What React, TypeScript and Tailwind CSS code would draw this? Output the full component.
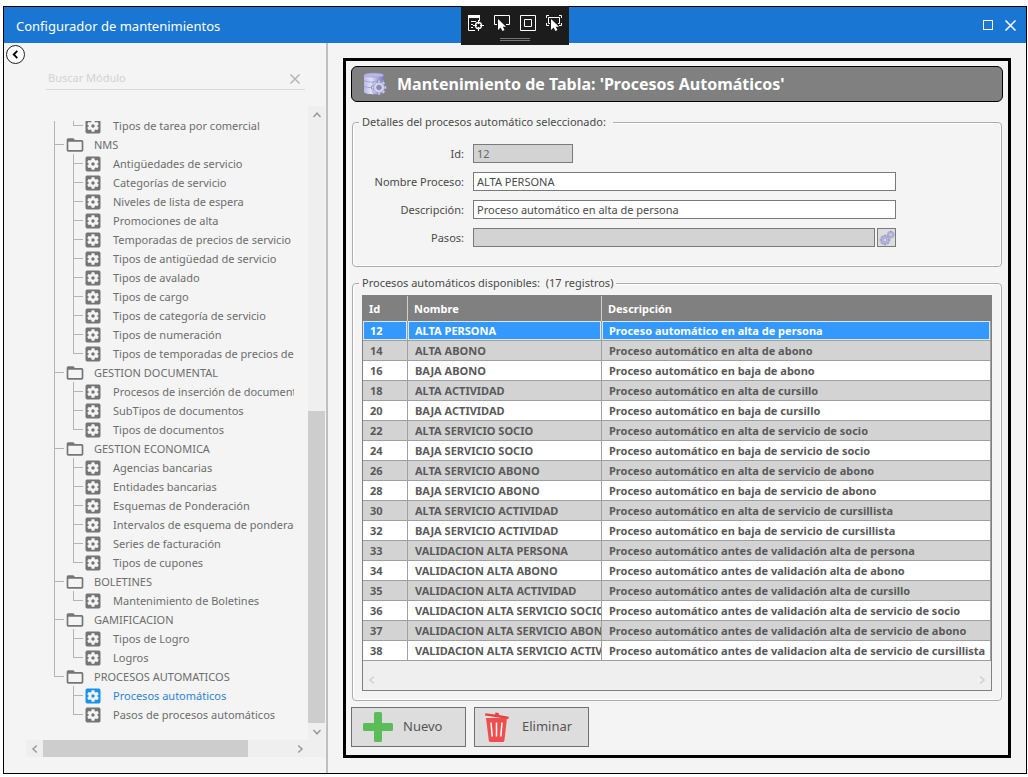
import { useState } from "react";
import { MdSettingsApplications, MdFolderOpen } from "react-icons/md";

type Group = { name: string; items: string[] };

const groups: Group[] = [
  { name: "", items: ["Tipos de tarea por comercial"] },
  {
    name: "NMS",
    items: [
      "Antigüedades de servicio",
      "Categorías de servicio",
      "Niveles de lista de espera",
      "Promociones de alta",
      "Temporadas de precios de servicio",
      "Tipos de antigüedad de servicio",
      "Tipos de avalado",
      "Tipos de cargo",
      "Tipos de categoría de servicio",
      "Tipos de numeración",
      "Tipos de temporadas de precios de servicio",
    ],
  },
  {
    name: "GESTION DOCUMENTAL",
    items: ["Procesos de inserción de documentos", "SubTipos de documentos", "Tipos de documentos"],
  },
  {
    name: "GESTION ECONOMICA",
    items: [
      "Agencias bancarias",
      "Entidades bancarias",
      "Esquemas de Ponderación",
      "Intervalos de esquema de ponderación",
      "Series de facturación",
      "Tipos de cupones",
    ],
  },
  { name: "BOLETINES", items: ["Mantenimiento de Boletines"] },
  { name: "GAMIFICACION", items: ["Tipos de Logro", "Logros"] },
  { name: "PROCESOS AUTOMATICOS", items: ["Procesos automáticos", "Pasos de procesos automáticos"] },
];

const rows: [number, string, string][] = [
  [12, "ALTA PERSONA", "Proceso automático en alta de persona"],
  [14, "ALTA ABONO", "Proceso automático en alta de abono"],
  [16, "BAJA ABONO", "Proceso automático en baja de abono"],
  [18, "ALTA ACTIVIDAD", "Proceso automático en alta de cursillo"],
  [20, "BAJA ACTIVIDAD", "Proceso automático en baja de cursillo"],
  [22, "ALTA SERVICIO SOCIO", "Proceso automático en alta de servicio de socio"],
  [24, "BAJA SERVICIO SOCIO", "Proceso automático en baja de servicio de socio"],
  [26, "ALTA SERVICIO ABONO", "Proceso automático en alta de servicio de abono"],
  [28, "BAJA SERVICIO ABONO", "Proceso automático en baja de servicio de abono"],
  [30, "ALTA SERVICIO ACTIVIDAD", "Proceso automático en alta de servicio de cursillista"],
  [32, "BAJA SERVICIO ACTIVIDAD", "Proceso automático en baja de servicio de cursillista"],
  [33, "VALIDACION ALTA PERSONA", "Proceso automático antes de validación alta de persona"],
  [34, "VALIDACION ALTA ABONO", "Proceso automático antes de validación alta de abono"],
  [35, "VALIDACION ALTA ACTIVIDAD", "Proceso automático antes de validación alta de cursillo"],
  [36, "VALIDACION ALTA SERVICIO SOCIO", "Proceso automático antes de validación alta de servicio de socio"],
  [37, "VALIDACION ALTA SERVICIO ABONO", "Proceso automático antes de validación alta de servicio de abono"],
  [38, "VALIDACION ALTA SERVICIO ACTIVIDAD", "Proceso automático antes de validacion alta de servicio de cursillista"],
];

function Chevron({ d, className }: { d: string; className: string }) {
  return (
    <svg viewBox="0 0 10 10" className={className} fill="none" stroke="currentColor" strokeWidth="1.5" aria-hidden="true">
      <path d={d} />
    </svg>
  );
}
const UP = "M1.5 7 5 3.2 8.5 7";
const DOWN = "M1.5 3 5 6.8 8.5 3";
const LEFT = "M6.8 1.5 3 5l3.8 3.5";
const RIGHT = "M3.2 1.5 7 5 3.2 8.5";

const TEETH = [0, 45, 90, 135, 180, 225, 270, 315];

function GearShape({ cx, cy, r, fill, hole }: { cx: number; cy: number; r: number; fill: string; hole: string }) {
  return (
    <g transform={`translate(${cx} ${cy}) scale(${r / 6})`}>
      {TEETH.map((a) => (
        <rect key={a} x="-1.2" y="-6" width="2.4" height="3" fill={fill} stroke="#7f7fae" strokeWidth="0.5" transform={`rotate(${a})`} />
      ))}
      <circle r="4.4" fill={fill} stroke="#8c8cba" strokeWidth="0.5" />
      <circle r="1.9" fill={hole} stroke="#7f7fae" strokeWidth="0.6" />
    </g>
  );
}

function DatabaseIcon() {
  return (
    <svg viewBox="0 0 24 24" className="h-6 w-6" aria-hidden="true">
      <defs>
        <linearGradient id="db" x1="0" x2="1">
          <stop offset="0" stopColor="#b9b8e6" />
          <stop offset="0.35" stopColor="#e0e0f8" />
          <stop offset="1" stopColor="#7776b4" />
        </linearGradient>
      </defs>
      <path d="M1 3C1 .5 21 .5 21 3V20c0 3-20 3-20 0Z" fill="url(#db)" />
      <ellipse cx="11" cy="3.2" rx="9.700" ry="2" fill="#b9b8e6" stroke="#9c9bd0" strokeWidth="0.6" />
      <path d="M1 8.5c2 2.200 18 2.200 20 0M1 14c2 2.200 18 2.200 20 0" fill="none" stroke="#a3a2d4" />
      <GearShape cx={16} cy={15.5} r={7.400} fill="#d3d4ee" hole="#8988bb" />
    </svg>
  );
}

function GearsIcon() {
  return (
    <svg viewBox="0 0 16 16" className="h-4 w-4" aria-hidden="true">
      <GearShape cx={6} cy={10} r={5} fill="#b9bbe0" hole="#e8e8f6" />
      <GearShape cx={11.8} cy={4.6} r={3.7} fill="#b9bbe0" hole="#e8e8f6" />
    </svg>
  );
}

function PlusIcon() {
  return (
    <svg viewBox="0 0 30 30" className="h-[30px] w-[30px]" aria-hidden="true">
      <path d="M12.5 0h5a1.5 1.5 0 0 1 1.5 1.5V11h9.500a1.500 1.500 0 0 1 1.500 1.500v5a1.500 1.500 0 0 1-1.500 1.500H19v9.500a1.500 1.500 0 0 1-1.500 1.500h-5a1.500 1.500 0 0 1-1.500-1.500V19H1.500A1.500 1.500 0 0 1 0 17.500v-5A1.500 1.500 0 0 1 1.500 11H11V1.500A1.500 1.500 0 0 1 12.500 0Z" fill="#5bbd57" />
    </svg>
  );
}

function TrashIcon() {
  return (
    <svg viewBox="0 0 24 30" className="h-[30px] w-6" aria-hidden="true">
      <path d="M.4 1.200 10 2.400l.5-2 3.200.5.3 2 9.800 1.900-.4 2.300L0 3.500Z" fill="#e8413f" />
      <path d="M1 6h21l-2.600 22.500q-.2 1.500-1.700 1.500H5.500Q4 30 3.800 28.500Z" fill="#ee4f4d" />
      <path d="m6 10.500 1.200 14M11.500 10.500v14M17 10.500l-1.200 14" stroke="#fff" strokeWidth="1.500" fill="none" />
    </svg>
  );
}

const CURSOR = "M4 4v11l2.600-2.400L8.500 16l2-1-1.700-3.300H12Z";

function DebugToolbar() {
  return (
    <div className="absolute -top-px left-1/2 flex h-[39px] w-[108px] -translate-x-1/2 flex-col items-center bg-[#1c1c1c] pt-[9px] text-white">
      <div className="flex gap-[10px]">
        <button aria-label="Árbol visual en vivo">
          <svg viewBox="0 0 16 16" className="block h-4 w-4" fill="none" stroke="currentColor">
            <path d="M.5 1v14.500H7M.5 2.500H12M11.500 2v4M3 6.500h5M3 9.500h2M3 12.500h2" />
            <path d="M0 1.500h12" strokeWidth="3" />
            <circle cx="10.500" cy="10.500" r="3" strokeWidth="1.300" />
            <path d="M10.500 5v4M10.500 12v4M5 10.500h4M12 10.500h4" />
          </svg>
        </button>
        <button aria-label="Seleccionar elemento">
          <svg viewBox="0 0 16 16" className="block h-4 w-4" fill="none" stroke="currentColor">
            <path d="M3 9.500H.5v-9h15v9H12" />
            <path d={CURSOR} fill="currentColor" stroke="none" />
          </svg>
        </button>
        <button aria-label="Mostrar adornos de diseño">
          <svg viewBox="0 0 16 16" className="block h-4 w-4" fill="none" stroke="currentColor">
            <path d="M.5.500h15v15H.5ZM4.500 4.500h7v7h-7Z" />
          </svg>
        </button>
        <button aria-label="Seguir elemento con foco">
          <svg viewBox="0 0 16 16" className="block h-4 w-4" fill="none" stroke="currentColor">
            <path d="M.5 3V.500H3M13 .500h2.500V3M.5 8v2.500H3M13 10.500h2.500V8M4 8.500H2.500v-6h11v6H12" />
            <path d={CURSOR} transform="translate(1 0)" fill="currentColor" stroke="none" />
          </svg>
        </button>
      </div>
      <div className="mt-[7px] h-[3px] w-[30px] border-y border-[#777]" />
    </div>
  );
}

function Tree({ selected, onSelect }: { selected: string; onSelect: (s: string) => void }) {
  return (
    <div className="mr-[14px] overflow-hidden">
      <ul className="-mt-[5px] whitespace-nowrap text-[11px] leading-[19px] text-[#6d6d6d]">
        {groups.map((g, gi) => {
          const lastGroup = gi === groups.length - 1;
          return (
            <li key={g.name}>
              {g.name && (
                <div className="flex h-[19px]">
                  <div className="w-[10px]">
                    <div className="h-[10px] border-b border-l border-[#b4b4b4]" />
                    {!lastGroup && <div className="h-[9px] border-l border-[#b4b4b4]" />}
                  </div>
                  <MdFolderOpen className="ml-px h-5 w-5 shrink-0 text-[#757575]" />
                  <span className="ml-[9px]">{g.name}</span>
                </div>
              )}
              <ul>
                {g.items.map((item, i) => (
                  <li key={item} className="flex h-[19px]">
                    <div className={lastGroup ? "w-[19px] shrink-0" : "w-[19px] shrink-0 border-l border-[#b4b4b4]"} />
                    <div className="w-[10px] shrink-0">
                      <div className="h-[10px] border-b border-l border-[#b4b4b4]" />
                      {i < g.items.length - 1 && <div className="h-[9px] border-l border-[#b4b4b4]" />}
                    </div>
                    <button
                      onClick={() => onSelect(item)}
                      className={item === selected ? "flex h-[19px] items-start text-[#2b83d8]" : "flex h-[19px] items-start"}
                    >
                      <MdSettingsApplications
                        className={
                          item === selected ? "h-5 w-5 shrink-0 text-[#1a94e6]" : "h-5 w-5 shrink-0 text-[#757575]"
                        }
                      />
                      <span className="ml-[10px]">{item}</span>
                    </button>
                  </li>
                ))}
              </ul>
            </li>
          );
        })}
      </ul>
    </div>
  );
}

function Sidebar() {
  const [selected, setSelected] = useState("Procesos automáticos");
  return (
    <aside className="flex w-[324px] shrink-0 flex-col border-r-2 border-[#bfbfbf] pb-4">
      <button
        aria-label="Contraer panel"
        className="mt-[2px] ml-[2px] flex h-[19px] w-[19px] items-center justify-center rounded-full border border-[#222] bg-white text-black"
      >
        <svg viewBox="0 0 10 10" className="h-[9px] w-[9px]" fill="none" stroke="currentColor" strokeWidth="2" aria-hidden="true">
          <path d="M7 1 3 5l4 4" />
        </svg>
      </button>
      <div className="mt-1 mr-[21px] ml-[42px] flex h-[22px] items-center border-b border-[#d9d9d9] pr-1 pl-[2px]">
        <input
          aria-label="Buscar Módulo"
          placeholder="Buscar Módulo"
          className="min-w-0 flex-1 bg-transparent text-[11px] outline-none placeholder:text-[#d2d2d2]"
        />
        <button aria-label="Borrar búsqueda" className="text-[#b5b5b5]">
          <svg viewBox="0 0 12 12" className="h-3 w-3" fill="none" stroke="currentColor" strokeWidth="1.500">
            <path d="m1.500 1.500 9 9M10.500 1.500l-9 9" />
          </svg>
        </button>
      </div>
      <div className="mt-4 ml-[22px] flex flex-1">
        <div className="min-w-0 flex-1 pt-[15px] pb-[15px] pl-7">
          <Tree selected={selected} onSelect={setSelected} />
        </div>
        <div className="flex w-[17px] flex-col bg-[#efefef] text-[#9a9a9a]">
          <div className="flex h-[17px] items-center justify-center">
            <Chevron d={UP} className="h-[10px] w-[10px]" />
          </div>
          <div className="flex-[48]" />
          <div className="flex-[52] bg-[#cdcdcd]" />
          <div className="flex h-[17px] items-center justify-center">
            <Chevron d={DOWN} className="h-[10px] w-[10px]" />
          </div>
        </div>
        <div className="w-px" />
      </div>
      <div className="mr-px ml-[22px] flex h-[17px] bg-[#efefef] text-[#9a9a9a]">
        <div className="flex w-[17px] items-center justify-center">
          <Chevron d={LEFT} className="h-[10px] w-[10px]" />
        </div>
        <div className="flex-[82] bg-[#cdcdcd]" />
        <div className="flex-[17]" />
        <div className="flex w-[17px] items-center justify-center">
          <Chevron d={RIGHT} className="h-[10px] w-[10px]" />
        </div>
        <div className="w-[17px]" />
      </div>
    </aside>
  );
}

const labelCls = "text-right text-[11px] leading-[19px]";
const editCls = "h-[19px] w-full border border-[#7a7a7a] bg-white px-[3px] text-[11px] leading-[17px] outline-none";
const readCls = "h-[19px] border border-[#7a7a7a] bg-[#d3d3d3] px-[3px] text-[11px] leading-[17px] text-[#666] outline-none";
const groupCls = "rounded-[4px] border border-[#a9adb0] shadow-[inset_0_0_0_1px_white]";
const legendCls = "ml-[6px] bg-[#f4f4f4] px-[3px] text-[11px] leading-[16px]";

function Details() {
  const [name, setName] = useState(rows[0][1]);
  const [desc, setDesc] = useState(rows[0][2]);
  return (
    <fieldset className={`mx-px mt-3 min-w-0 pb-[19px] ${groupCls}`}>
      <legend className={`${legendCls} pr-[7px]`}>Detalles del procesos automático seleccionado:</legend>
      <div className="mr-[105px] ml-[10px] grid grid-cols-[101px_1fr] gap-x-[9px] gap-y-[9px] pt-[14px]">
        <label htmlFor="id" className={labelCls}>Id:</label>
        <input id="id" readOnly value="12" className={`w-[100px] ${readCls}`} />
        <label htmlFor="nombre" className={labelCls}>Nombre Proceso:</label>
        <input id="nombre" value={name} onChange={(e) => setName(e.target.value)} className={editCls} />
        <label htmlFor="desc" className={labelCls}>Descripción:</label>
        <input id="desc" value={desc} onChange={(e) => setDesc(e.target.value)} className={editCls} />
        <label htmlFor="pasos" className={labelCls}>Pasos:</label>
        <div className="flex gap-[2px]">
          <input id="pasos" readOnly value="" className={`min-w-0 flex-1 ${readCls}`} />
          <button aria-label="Editar pasos" className="flex h-[19px] w-[19px] items-center justify-center border border-[#7a7a7a] bg-[#dddddd]">
            <GearsIcon />
          </button>
        </div>
      </div>
    </fieldset>
  );
}

function ProcessTable() {
  const [sel, setSel] = useState(12);
  const th = "h-[25px] border-r border-[#d0d0d0] p-0 pl-[6px] text-left last:border-[#808080]";
  const base = "h-5 overflow-hidden border-r border-b border-[#a0a0a0] p-0 pl-[7px]";
  return (
    <fieldset className={`mx-px mt-2 flex min-w-0 flex-1 flex-col px-[9px] pb-[9px] ${groupCls}`}>
      <legend className="-ml-[3px] bg-[#f4f4f4] px-[3px] text-[11px] leading-[16px] whitespace-pre">
        Procesos automáticos disponibles:  (17 registros)
      </legend>
      <div className="mt-1 overflow-hidden border border-[#808080] bg-[#efefef]">
        <table className="w-full table-fixed border-separate border-spacing-0 text-[11px] leading-[19px] font-bold whitespace-nowrap text-[#5a5a5a]">
          <colgroup>
            <col className="w-[45px]" />
            <col className="w-[194px]" />
            <col />
          </colgroup>
          <thead className="bg-[#808080] text-white">
            <tr>
              <th className={th}>Id</th>
              <th className={th}>Nombre</th>
              <th className={th}>Descripción</th>
            </tr>
          </thead>
          <tbody>
            {rows.map((r) => (
              <tr
                key={r[0]}
                onClick={() => setSel(r[0])}
                className={r[0] === sel ? "bg-[#3399ff] text-white" : "bg-white even:bg-[#d3d3d3]"}
              >
                {r.map((c, i) => (
                  <td key={i} className={r[0] === sel ? `${base} shadow-[inset_0_0_0_1px_#d5e9fb]` : base}>
                    {c}
                  </td>
                ))}
              </tr>
            ))}
          </tbody>
        </table>
        <div className="flex h-[29px] items-center justify-between px-1 pt-[9px] text-[#cfcfcf]">
          <Chevron d={LEFT} className="h-[10px] w-[10px]" />
          <Chevron d={RIGHT} className="h-[10px] w-[10px]" />
        </div>
      </div>
    </fieldset>
  );
}

const actionCls = "flex h-10 w-[115px] items-center border border-[#707070] bg-[#dddddd] text-[13px] text-[#555]";

export default function App() {
  return (
    <div className="flex min-h-screen flex-col bg-white pt-[6px] pr-px pb-[3px] pl-[3px] font-['Noto_Sans','Open_Sans',sans-serif] text-[#4a4a4a]">
      <div className="relative flex flex-1 flex-col border border-black bg-[#f4f4f4]">
        <header className="flex h-9 items-center justify-between bg-[#1976d2] pr-[10px] pl-3 text-white">
          <h1 className="pt-[3px] text-[13px]">Configurador de mantenimientos</h1>
          <div className="flex items-center gap-3">
            <button aria-label="Maximizar" className="h-[10px] w-[10px] border border-white" />
            <button aria-label="Cerrar">
              <svg viewBox="0 0 11 11" className="h-[11px] w-[11px]" fill="none" stroke="currentColor" strokeWidth="1.500">
                <path d="m.5.500 10 10M10.500.500l-10 10" />
              </svg>
            </button>
          </div>
        </header>
        <DebugToolbar />
        <div className="flex flex-1">
          <Sidebar />
          <main className="flex min-w-0 flex-1 p-[15px]">
            <div className="flex min-w-0 flex-1 flex-col border-[3px] border-black p-[5px] pb-2">
              <h2 className="flex h-9 shrink-0 items-center gap-[10px] rounded-[6px] border border-black bg-[#808080] pl-[11px] text-[16px] font-bold text-white">
                <DatabaseIcon />
                Mantenimiento de Tabla: 'Procesos Automáticos'
              </h2>
              <Details />
              <ProcessTable />
              <div className="mt-[6px] flex gap-2">
                <button className={`${actionCls} gap-[10px] pl-[11px]`}>
                  <PlusIcon />
                  Nuevo
                </button>
                <button className={`${actionCls} gap-[13px] pl-[10px]`}>
                  <TrashIcon />
                  Eliminar
                </button>
              </div>
            </div>
          </main>
        </div>
      </div>
    </div>
  );
}
